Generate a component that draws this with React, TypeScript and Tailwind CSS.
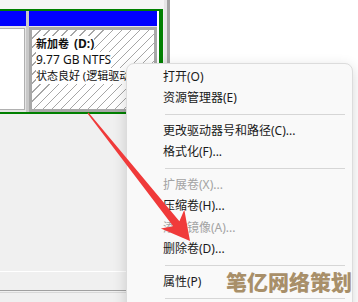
import React from "react";

type Item = { t: string; d?: boolean } | "sep";

const items: Item[] = [
  { t: "打开(O)" },
  { t: "资源管理器(E)" },
  "sep",
  { t: "更改驱动器号和路径(C)..." },
  { t: "格式化(F)..." },
  "sep",
  { t: "扩展卷(X)...", d: true },
  { t: "压缩卷(H)..." },
  { t: "添加镜像(A)...", d: true },
  { t: "删除卷(D)..." },
  "sep",
  { t: "属性(P)" },
  "sep",
];

export default function App() {
  return (
    <div className="relative w-[358px] h-[302px] overflow-hidden bg-white font-['Noto_Sans','Noto_Sans_CJK_SC',sans-serif]">
      <div className="flex h-full">
        {/* left disk panel */}
        <div className="w-[164px] flex flex-col bg-[#f0f0f0]">
          <div className="h-[9px] bg-[#f5f5f5]" />
          <div className="h-[105px] w-[163px] flex border-t-2 border-b-2 border-r-4 border-[#008000] bg-[#c8c8c8]">
            {/* left partition */}
            <div className="w-[26px] flex flex-col">
              <div className="h-[15px] bg-[#0000ff]" />
              <div className="flex-1 flex pt-[2px] pb-[2px] pr-[1px] bg-[#e4e4e4]">
                <div className="flex-1 bg-white border border-l-0 border-[#b0b0b0]" />
              </div>
            </div>
            <div className="w-[3px]" />
            {/* right partition D: */}
            <div className="w-[128px] flex flex-col">
              <div className="h-[15px] bg-[#0000ff]" />
              <div className="flex-1 flex pt-[1px] bg-[#e4e4e4]">
                <div className="flex-1 flex p-[3px] bg-[#a8a8a8]">
                  <div className="flex-1 overflow-hidden pl-[4px] pt-[6px] bg-[repeating-linear-gradient(135deg,#ffffff_0px,#ffffff_5.4px,#a6a6a6_5.4px,#a6a6a6_6.4px)]">
                    <div className="h-[16px] flex items-center whitespace-nowrap">
                      <span className="bg-white font-bold text-[11px] leading-[16px] text-[#111]">
                        新加卷
                      </span>
                      <span className="bg-white font-bold text-[12px] leading-[16px] text-[#111] pl-[5px]">
                        (D:)
                      </span>
                    </div>
                    <div className="h-[16px] flex items-center whitespace-nowrap">
                      <span className="bg-white text-[12px] leading-[16px] text-[#111]">
                        9.77 GB NTFS
                      </span>
                    </div>
                    <div className="h-[16px] flex items-center whitespace-nowrap">
                      <span className="bg-white text-[11px] leading-[16px] text-[#111]">
                        状态良好 (逻辑驱动器)
                      </span>
                    </div>
                  </div>
                </div>
              </div>
            </div>
            <div className="w-[2px] bg-white" />
          </div>
          <div className="flex-1" />
          <div className="h-px bg-white" />
          <div className="h-[18px]" />
          <div className="h-px bg-[#a0a0a0]" />
          <div className="h-px bg-[#f0f0f0]" />
          <div className="h-px bg-[#d8d8d8]" />
          <div className="h-[9px]" />
        </div>
        <div className="w-[3px] bg-[#e6e6e6]" />
        <div className="w-[3px] bg-[#a3a3a3]" />
        <div className="flex-1 bg-white" />
      </div>

      {/* context menu */}
      <div className="absolute left-[126px] top-[63px] w-[227px] h-[280px] rounded-[8px] border border-[#dcdcdc] bg-[#f9f9f9] shadow-[0_4px_14px_rgba(0,0,0,0.16)] pt-[2px]">
        {items.map((it, i) =>
          it === "sep" ? (
            <div key={i} className="h-[11px] flex items-center pl-[38px] pr-[7px]">
              <div className="h-px flex-1 bg-[#d6d6d6]" />
            </div>
          ) : (
            <div
              key={i}
              className={`h-[21.5px] flex items-center pl-[36px] text-[12px] leading-none whitespace-nowrap ${
                it.d ? "text-[#a3a3a3]" : "text-[#1a1a1a]"
              }`}
            >
              {it.t}
            </div>
          )
        )}
      </div>

      {/* red annotation arrow */}
      <svg className="absolute left-0 top-0 pointer-events-none" width="358" height="302" viewBox="0 0 358 302">
        <polygon
          points="87.5,113.4 173.2,226.3 160.9,228.5 190,241 184.3,209.8 179.4,221.3 88.5,112.6"
          fill="#f03a3a"
        />
      </svg>

      {/* watermark */}
      <div className="absolute left-[226px] top-[268px] text-[21px] leading-[26px] font-black text-[#a0845a] opacity-90 whitespace-nowrap font-['Noto_Sans_CJK_SC',sans-serif]">
        笔亿网络策划
      </div>
    </div>
  );
}
